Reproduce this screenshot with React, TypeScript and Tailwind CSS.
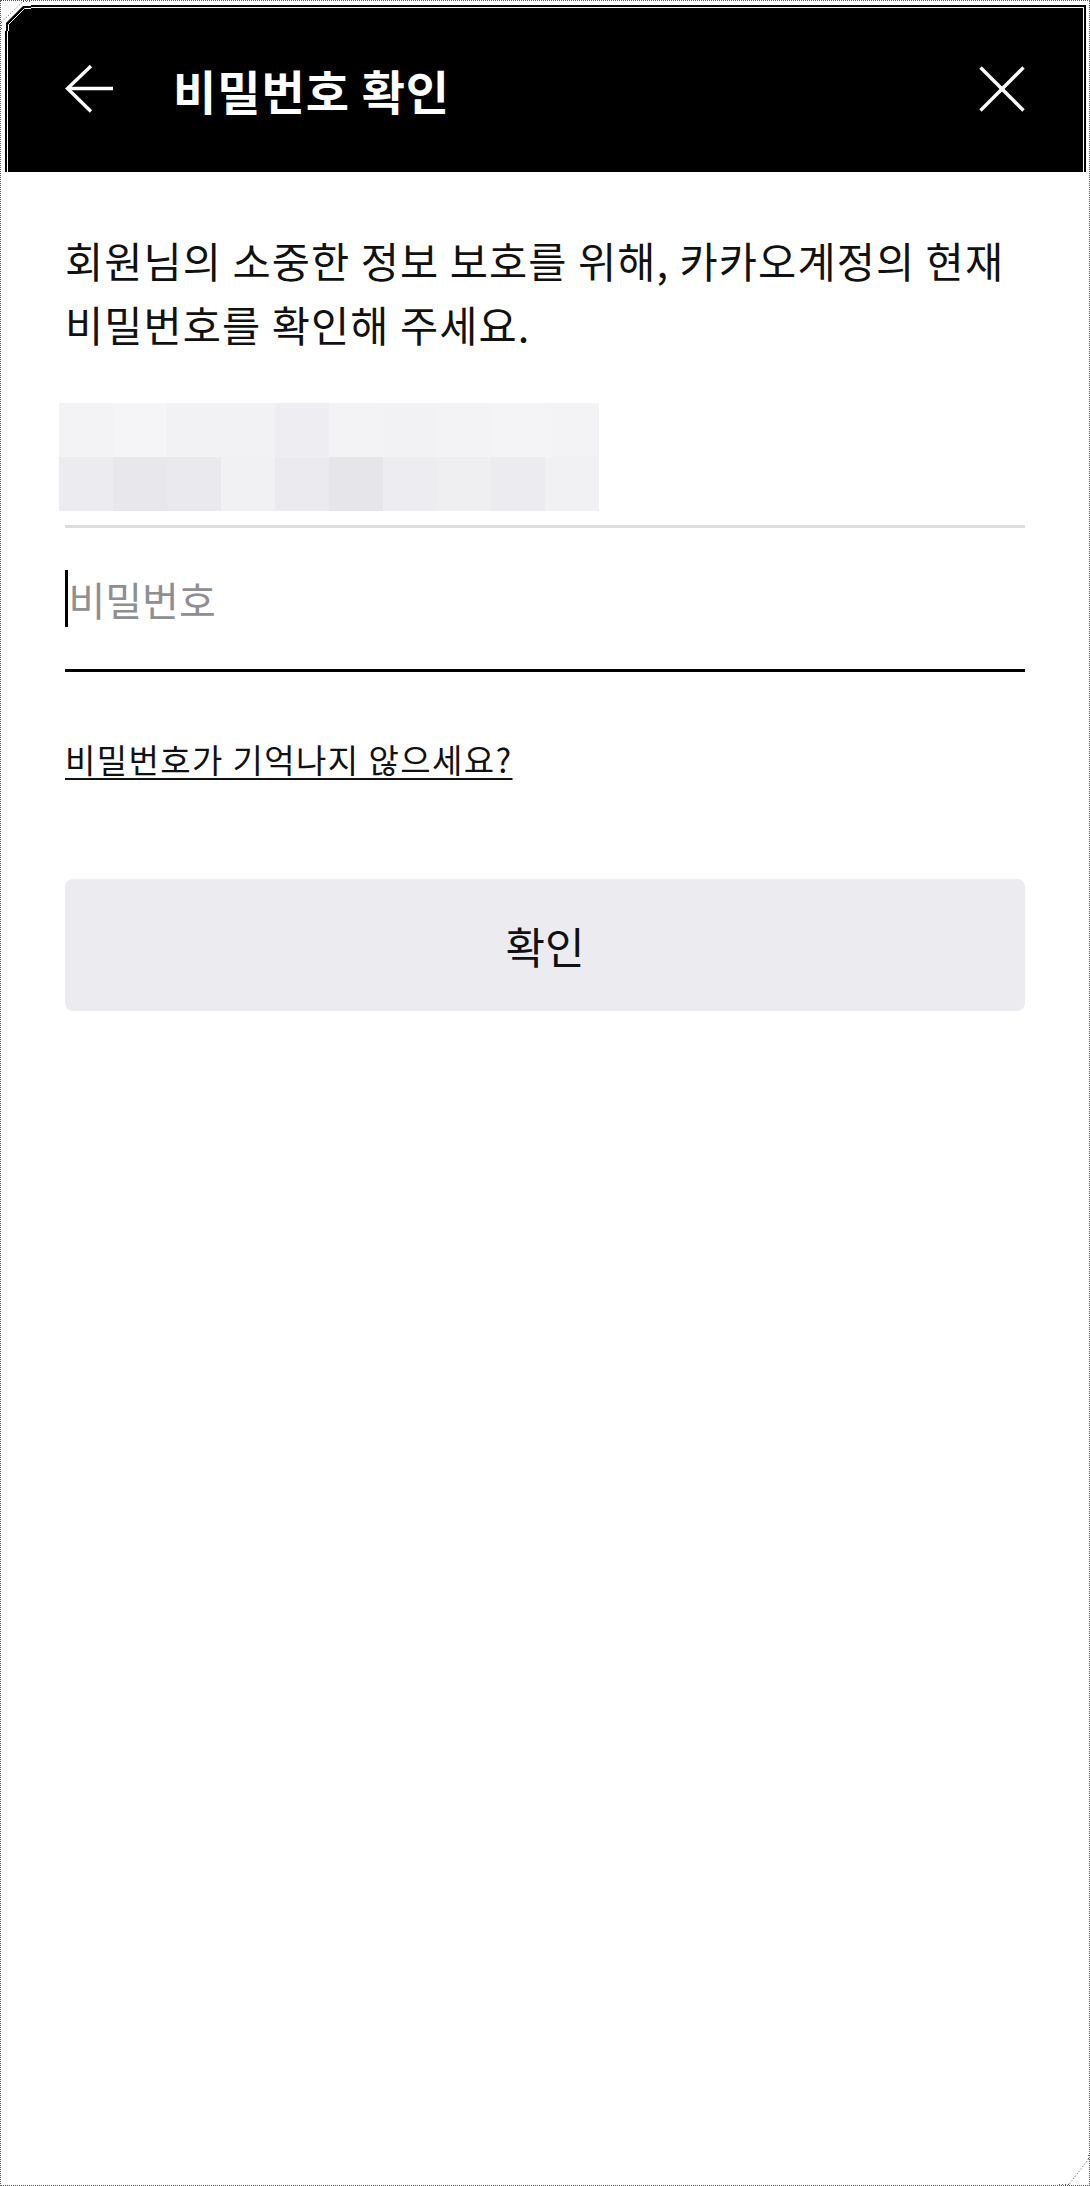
import * as React from "react";

const mosaicTop = ["#f3f3f5", "#f5f5f7", "#f2f2f4", "#f2f2f4", "#eeeef2", "#f3f3f5", "#f2f2f4", "#f3f3f5", "#f4f4f6", "#f3f3f5"];
const mosaicBottom = ["#ececf0", "#e8e8ec", "#eaeaee", "#f1f1f3", "#ebebef", "#e5e5ea", "#ededf1", "#efeff2", "#ececf0", "#f1f1f3"];

function BackArrow(): React.ReactElement {
  return (
    <svg width="48" height="48" viewBox="0 0 48 48" fill="none" stroke="#fff" strokeWidth="3.4">
      <path d="M48 23.5H2" />
      <path d="M26 1L2.5 23.5L26 46.5" />
    </svg>
  );
}

function CloseIcon(): React.ReactElement {
  return (
    <svg width="46" height="46" viewBox="0 0 46 46" fill="none" stroke="#fff" strokeWidth="3.4">
      <path d="M1.5 1.5L44.5 44.5" />
      <path d="M44.5 1.5L1.5 44.5" />
    </svg>
  );
}

// corner pieces of the screenshot frame (chamfered dotted border + header edge)
function TopLeftCorner(): React.ReactElement {
  return (
    <svg className="absolute left-0 top-0" width="30" height="30" viewBox="0 0 30 30">
      <rect width="30" height="30" fill="#fff" />
      <path d="M22 0.5H30 M0.5 21V30 M0.5 21L22 0.5" stroke="#555" strokeWidth="1" strokeDasharray="1 2" fill="none" />
      <polygon points="5,22 22,5 30,5 30,30 5,30" fill="#000" />
      <path d="M7.5 30V23.5L23.5 7.5H30" stroke="#fff" strokeWidth="1" fill="none" />
    </svg>
  );
}

function BottomRightCorner(): React.ReactElement {
  return (
    <svg className="absolute bottom-0 right-0" width="30" height="30" viewBox="0 0 30 30">
      <rect width="30" height="30" fill="#fff" />
      <path d="M29.5 0V4 M0 29.5H10 M29.5 4L10 29.5" stroke="#555" strokeWidth="1" strokeDasharray="1 2" fill="none" />
    </svg>
  );
}

export default function App(): React.ReactElement {
  return (
    <div
      className="relative flex h-[2186px] w-[1090px] flex-col border border-dotted border-[#555] bg-white text-black"
      style={{ fontFamily: '"Noto Sans CJK KR", "Noto Sans", sans-serif' }}
    >
      <header className="ml-[4px] mr-[3px] mt-[4px] flex h-[167px] shrink-0 items-center bg-black pl-[60px] pr-[61px] shadow-[inset_2px_2px_0_#000,inset_-2px_0_0_#000,inset_3px_3px_0_#fff,inset_-3px_0_0_#fff]">
        <BackArrow />
        <h1 className="ml-[60px] flex-1 pt-[2px] text-[47px] font-bold leading-none tracking-[1px] text-white">
          비밀번호 확인
        </h1>
        <CloseIcon />
      </header>

      <main className="flex flex-col px-[64px]">
        <p className="mt-[56px] text-[41.5px] leading-[64px] tracking-[1.1px] text-[#111]">
          회원님의 소중한 정보 보호를 위해, 카카오계정의 현재
          <br />
          비밀번호를 확인해 주세요.
        </p>

        <div className="ml-[-6px] mt-[47px] flex w-[540px] flex-col">
          <div className="flex">
            {mosaicTop.map((c, i) => (
              <div key={i} className="h-[54px] w-[54px]" style={{ backgroundColor: c }} />
            ))}
          </div>
          <div className="flex">
            {mosaicBottom.map((c, i) => (
              <div key={i} className="h-[54px] w-[54px]" style={{ backgroundColor: c }} />
            ))}
          </div>
        </div>

        <div className="mt-[14px] h-[3px] bg-[#dcdce1]" />

        <div className="flex h-[141px] items-center">
          <div className="h-[57px] w-[2.5px] shrink-0 bg-black" />
          <input
            type="password"
            placeholder="비밀번호"
            className="min-w-0 flex-1 bg-transparent pl-[1px] text-[40px] text-black outline-none placeholder:text-[#8e8e93]"
          />
        </div>
        <div className="h-[3px] bg-black" />

        <a
          href="#"
          className="mt-[63px] self-start text-[33px] leading-[48px] tracking-[1.4px] text-[#111] underline decoration-[2px] underline-offset-[5px]"
        >
          비밀번호가 기억나지 않으세요?
        </a>

        <button
          type="button"
          className="mt-[96px] flex h-[132px] items-center justify-center rounded-[8px] bg-[#ececf0] text-[43px] text-[#111]"
        >
          확인
        </button>
      </main>

      <TopLeftCorner />
      <BottomRightCorner />
    </div>
  );
}
